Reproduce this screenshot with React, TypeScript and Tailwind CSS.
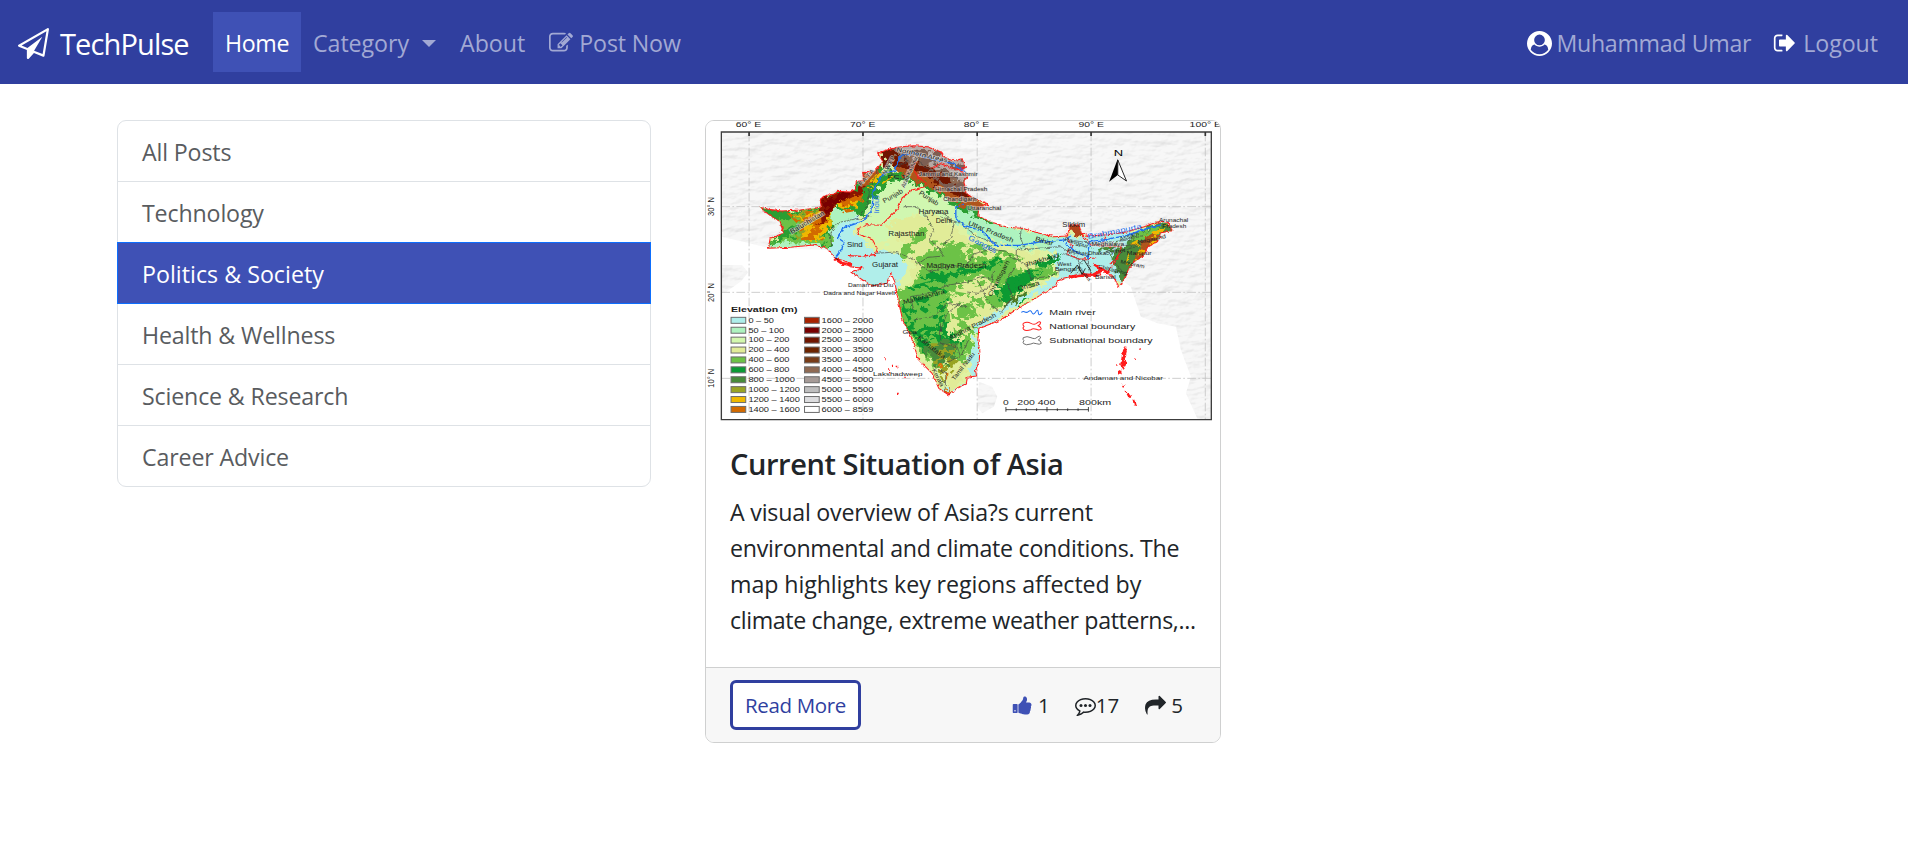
import type { ReactNode } from "react";

const BODY = "'Open Sans', 'Noto Sans', sans-serif";
const MAP_FONT = "'Liberation Sans', Arial, sans-serif";

function Glyph({ d, className, children }: { d: string; className: string; children?: ReactNode }) {
  return (
    <svg viewBox="0 0 1792 1792" className={className} fill="currentColor" aria-hidden="true">
      <path d={d} />
      {children}
    </svg>
  );
}

const ICONS = {
  plane:
    "M1764 11q33 24 27 64l-256 1536q-5 29-32 45-14 8-31 8-11 0-24-5l-527-215-298 327q-18 21-47 21-14 0-23-4-19-7-30-23.5t-11-36.5v-452l-472-193q-37-14-40-55-3-39 32-59l1664-960q35-21 68 2zm-342 1499l221-1323-1434 827 336 137 863-639-478 797z",
  edit:
    "M888 1184l116-116-152-152-116 116v56h96v96h56zm440-720q-16-16-33 1l-350 350q-17 17-1 33t33-1l350-350q17-17 1-33zm80 594v190q0 119-84.5 203.5t-203.5 84.5h-832q-119 0-203.5-84.5t-84.5-203.5v-832q0-119 84.5-203.5t203.5-84.5h832q63 0 117 25 15 7 18 23 3 17-9 29l-49 49q-14 14-32 8-23-6-45-6h-832q-66 0-113 47t-47 113v832q0 66 47 113t113 47h832q66 0 113-47t47-113v-126q0-13 9-22l64-64q15-15 35-7t20 29zm-96-738l288 288-672 672h-288v-288zm444 132l-92 92-288-288 92-92q28-28 68-28t68 28l152 152q28 28 28 68t-28 68z",
  user:
    "M1523 1339q-22-155-87.5-257.5t-184.5-118.5q-67 74-159.5 115.5t-195.5 41.5-195.5-41.5-159.5-115.5q-119 16-184.5 118.5t-87.5 257.5q106 150 271 237.5t356 87.5 356-87.5 271-237.5zm-243-699q0-159-112.5-271.5t-271.5-112.5-271.5 112.5-112.5 271.5 112.5 271.5 271.5 112.5 271.5-112.5 112.5-271.5zm512 256q0 182-71 347.5t-190.5 286-285.5 191.5-349 71-349-71-285.5-191.5-190.5-286-71-347.5 71-348 191-286 286-191 348-71 348 71 286 191 191 286 71 348z",
  signOut:
    "M704 1440q0 4 1 20t.5 26.5-3 23.5-10 19.5-20.5 6.5h-320q-119 0-203.5-84.5t-84.5-203.5v-704q0-119 84.5-203.5t203.5-84.5h320q13 0 22.5 9.5t9.5 22.5q0 4 1 20t.5 26.5-3 23.5-10 19.5-20.5 6.5h-320q-66 0-113 47t-47 113v704q0 66 47 113t113 47h312l11.5 1 11.5 3 8 5.5 7 9 2 13.5zm928-544q0 26-19 45l-544 544q-19 19-45 19t-45-19-19-45v-288h-448q-26 0-45-19t-19-45v-384q0-26 19-45t45-19h448v-288q0-26 19-45t45-19 45 19l544 544q19 19 19 45z",
  thumb:
    "M320 1344q0-26-19-45t-45-19q-27 0-45.5 19t-18.5 45q0 27 18.5 45.5t45.5 18.5q26 0 45-18.5t19-45.5zm1344-512q0 86-55 149 15 44 15 76 3 76-43 137 17 56 0 117-15 57-54 94 9 112-49 181-64 76-197 78h-129q-66 0-144-15.5t-121.5-29-120.5-39.5q-123-43-158-44-26-1-45-19.5t-19-44.5v-641q0-25 18-43.5t43-20.5q24-2 76-59t101-121q68-87 101-120 18-18 31-48t17.5-48.5 13.5-60.5q7-39 12.5-61t19.5-52 34-50q19-19 45-19 46 0 82.5 10.5t60 26 40 40.5 24 45 12 50 5 45 .5 39q0 38-9.5 76t-19 60-27.5 56q-3 6-10 18t-11 22-8 24h277q78 0 135 57t57 135zm-1184 0v640q0 26-19 45t-45 19h-288q-26 0-45-19t-19-45v-640q0-26 19-45t45-19h288q26 0 45 19t19 45z",
  share:
    "M1792 640q0 26-19 45l-512 512q-19 19-45 19t-45-19-19-45v-256h-224q-98 0-175.5 6t-154 21.5-133 42.5-105.5 69.5-80 101-48.5 138.5-17.5 181q0 55 5 123 0 6 2.5 23.5t2.5 26.5q0 15-8.5 25t-23.5 10q-16 0-28-17-7-9-13-22t-13.5-30-10.5-24q-127-285-127-451 0-199 53-333 162-403 875-403h224v-256q0-26 19-45t45-19 45 19l512 512q19 19 19 45z",
  comment:
    "M896 384q-204 0-381.5 69.5t-282 187.5-104.5 255q0 112 71.5 213.5t201.5 175.5l87 50-27 96q-24 91-70 172 152-63 275-171l43-38 57 6q69 8 130 8 204 0 381.5-69.5t282-187.5 104.5-255-104.5-255-282-187.5-381.5-69.5zm896 512q0 174-120 321.5t-326 233-450 85.5q-70 0-145-8-198 175-460 242-49 14-114 22h-5q-15 0-27-10.5t-16-27.5v-1q-3-4-.5-12t2-10 4.5-9.5l6-9 7-8.5 8-9q7-8 31-34.5t34.5-38 31-39.5 32.5-51 27-59 26-76q-157-89-247.5-220t-90.5-281q0-174 120-321.5t326-233 450-85.5 450 85.5 326 233 120 321.5z",
};

type Label = { t: string; x: number; y: number; w: number; s?: number; r?: number; c?: string; b?: boolean; h?: boolean };

function MapText({ t, x, y, w, s = 20, r = 0, c = "#1c1c1c", b = false, h = false }: Label) {
  return (
    <text
      transform={`translate(${x} ${y}) rotate(${r})`}
      textLength={w}
      lengthAdjust="spacingAndGlyphs"
      fontSize={s}
      fill={c}
      fontWeight={b ? 700 : 400}
      stroke={h ? "rgba(225,222,218,.6)" : "none"}
      strokeWidth={h ? 5 : 0}
      paintOrder="stroke"
    >
      {t}
    </text>
  );
}

const LAND =
  "M178 292L205 298 245 303 300 300 345 295 363 290 360 268 372 258 400 252 412 244 430 245 450 246 465 238 468 215 490 210 487 187 520 188 530 175 548 155 532 130 560 120 590 112 640 107 680 110 720 125 730 140 755 152 785 146 795 175 780 180 802 200 790 215 797 250 820 265 865 283 835 292 832 318 870 335 920 352 965 355 1010 368 1060 380 1100 378 1108 345 1135 345 1142 370 1165 378 1220 374 1280 365 1330 350 1370 335 1400 340 1415 362 1380 368 1370 395 1340 412 1325 440 1300 455 1282 480 1275 500 1255 530 1240 505 1215 482 1190 470 1200 495 1170 498 1130 500 1100 505 1070 512 1065 528 1030 548 990 575 960 590 900 630 870 642 835 655 832 690 838 720 836 755 825 780 828 798 800 802 798 822 770 835 745 855 715 835 695 790 655 750 632 680 607 630 593 570 583 515 572 490 560 520 515 528 452 487 485 475 450 470 440 455 405 445 380 415 340 405 270 412 205 415 210 385 250 370 240 335 215 320Z";

const AXIS: Label[] = [
  { t: "60° E", x: 107, y: 50, w: 76 },
  { t: "70° E", x: 449, y: 50, w: 76 },
  { t: "80° E", x: 790, y: 50, w: 76 },
  { t: "90° E", x: 1133, y: 50, w: 76 },
  { t: "100° E", x: 1466, y: 50, w: 94 },
  { t: "30° N", x: 43, y: 318, w: 57, s: 29, r: -90 },
  { t: "20° N", x: 43, y: 576, w: 57, s: 29, r: -90 },
  { t: "10° N", x: 43, y: 833, w: 57, s: 29, r: -90 },
];

const PLACES: Label[] = [
  { t: "Northern Areas", x: 588, y: 124, w: 155, s: 18, r: 12, h: true },
  { t: "N.W.F.P", x: 556, y: 196, w: 62, s: 18, r: -62, h: true },
  { t: "F.C.T.", x: 562, y: 208, w: 60, s: 18 },
  { t: "F.A.T.A", x: 482, y: 228, w: 60, s: 16, r: -48, h: true },
  { t: "Azad Kashmir", x: 612, y: 234, w: 100, s: 17, r: -66, h: true },
  { t: "Jammu and Kashmir", x: 655, y: 198, w: 176, s: 17, h: true },
  { t: "Himachal Pradesh", x: 704, y: 243, w: 156, s: 17, h: true },
  { t: "Chandigarh", x: 728, y: 273, w: 100, s: 17, h: true },
  { t: "Uttaranchal", x: 800, y: 300, w: 102, s: 18, h: true },
  { t: "Baluchistan", x: 275, y: 372, w: 115, s: 20, r: -31, h: true },
  { t: "Punjab", x: 552, y: 280, w: 66, s: 20, r: -30 },
  { t: "Punjab", x: 654, y: 252, w: 66, s: 20, r: 33 },
  { t: "Haryana", x: 654, y: 313, w: 90, s: 20 },
  { t: "Delhi", x: 706, y: 340, w: 48, s: 19 },
  { t: "Rajasthan", x: 564, y: 378, w: 108, s: 20 },
  { t: "Sind", x: 440, y: 411, w: 47, s: 20 },
  { t: "Gujarat", x: 515, y: 470, w: 78, s: 20 },
  { t: "Madhya Pradesh", x: 678, y: 475, w: 180, s: 20 },
  { t: "Uttar Pradesh", x: 802, y: 344, w: 144, s: 20, r: 22 },
  { t: "Bihar", x: 1002, y: 392, w: 56, s: 20, r: 16 },
  { t: "Sikkim", x: 1085, y: 352, w: 68, s: 19 },
  { t: "Meghalaya", x: 1172, y: 409, w: 98, s: 17, h: true },
  { t: "Rangpur", x: 1090, y: 392, w: 74, s: 17, r: 18 },
  { t: "Rajshahi", x: 1098, y: 426, w: 68, s: 17, r: 12 },
  { t: "Dhaka", x: 1162, y: 436, w: 54, s: 17 },
  { t: "Sylhet", x: 1215, y: 434, w: 60, s: 17, r: -8 },
  { t: "Assam", x: 1258, y: 394, w: 60, s: 17, r: -18 },
  { t: "Nagaland", x: 1312, y: 402, w: 86, s: 17, r: -12 },
  { t: "Manipur", x: 1278, y: 434, w: 74, s: 17 },
  { t: "Mizoram", x: 1258, y: 460, w: 74, s: 16, r: 12 },
  { t: "Arunachal", x: 1374, y: 337, w: 88, s: 15 },
  { t: "Pradesh", x: 1384, y: 354, w: 72, s: 17 },
  { t: "Jharkhand", x: 975, y: 470, w: 104, s: 19, r: -16 },
  { t: "Chhattisgarh", x: 872, y: 560, w: 118, s: 18, r: -62 },
  { t: "Orissa", x: 954, y: 543, w: 66, s: 20, r: -16 },
  { t: "West", x: 1070, y: 467, w: 42, s: 17 },
  { t: "Bengal", x: 1062, y: 484, w: 66, s: 17 },
  { t: "Khulna", x: 1128, y: 474, w: 54, s: 15, r: 48 },
  { t: "Barisal", x: 1183, y: 507, w: 62, s: 16 },
  { t: "Chittagong", x: 1192, y: 474, w: 88, s: 16, r: 14 },
  { t: "Maharashtra", x: 610, y: 583, w: 128, s: 19, r: -15 },
  { t: "Daman and Diu", x: 443, y: 530, w: 136, s: 17 },
  { t: "Dadra and Nagar Haveli", x: 370, y: 554, w: 214, s: 17 },
  { t: "Goa", x: 606, y: 672, w: 44, s: 18 },
  { t: "Karnataka", x: 650, y: 686, w: 100, s: 20, r: 38 },
  { t: "Andhra Pradesh", x: 750, y: 690, w: 155, s: 19, r: -27 },
  { t: "Kerala", x: 694, y: 780, w: 58, s: 18, r: 62 },
  { t: "Tamil Nadu", x: 762, y: 812, w: 100, s: 18, r: -52 },
  { t: "Lakshadweep", x: 518, y: 797, w: 148, s: 17 },
  { t: "Andaman and Nicobar", x: 1148, y: 809, w: 238, s: 18 },
  { t: "Indus", x: 537, y: 310, w: 54, s: 24, r: -90, c: "#1a6fe8" },
  { t: "Ganges", x: 802, y: 388, w: 92, s: 22, r: 27, c: "#1a6fe8" },
  { t: "Brahmapurta", x: 1162, y: 387, w: 164, s: 22, r: -11, c: "#1a6fe8" },
];

const LEGEND: [string, string][] = [
  ["#aeeeea", "0 – 50"],
  ["#aef3bf", "50 – 100"],
  ["#d3f8ae", "100 – 200"],
  ["#e1ec98", "200 – 400"],
  ["#6cc246", "400 – 600"],
  ["#0a9a33", "600 – 800"],
  ["#488b3a", "800 – 1000"],
  ["#99a324", "1000 – 1200"],
  ["#efb800", "1200 – 1400"],
  ["#d26a00", "1400 – 1600"],
  ["#a82200", "1600 – 2000"],
  ["#780000", "2000 – 2500"],
  ["#701600", "2500 – 3000"],
  ["#6c2400", "3000 – 3500"],
  ["#783c18", "3500 – 4000"],
  ["#8f6a53", "4000 – 4500"],
  ["#a69b97", "4500 – 5000"],
  ["#bebebe", "5000 – 5500"],
  ["#dcdcde", "5500 – 6000"],
  ["#ffffff", "6000 – 8569"],
];

const BOUNDARY_ICON =
  "M3 4Q14-2 26 4T44 3Q52-4 55 2 54 8 48 11 56 14 57 21 52 26 42 22T26 23Q10 28 4 22 0 18 5 13 0 9 3 4Z";

function ElevationMap() {
  return (
    <svg
      viewBox="18 33 1539 900"
      preserveAspectRatio="none"
      className="block h-[300px] w-full"
      fontFamily={MAP_FONT}
      role="img"
      aria-label="Elevation map"
    >
      <defs>
        <filter id="relief" x="0" y="0" width="100%" height="100%">
          <feTurbulence type="fractalNoise" baseFrequency="0.02 0.05" numOctaves="4" seed="8" />
          <feDiffuseLighting surfaceScale="5" diffuseConstant="1.25" lightingColor="#fff">
            <feDistantLight azimuth="225" elevation="50" />
          </feDiffuseLighting>
          <feComponentTransfer result="l">
            <feFuncR type="linear" slope="0.34" intercept="0.59" />
            <feFuncG type="linear" slope="0.34" intercept="0.59" />
            <feFuncB type="linear" slope="0.34" intercept="0.59" />
          </feComponentTransfer>
          <feComposite in="l" in2="SourceGraphic" operator="in" />
        </filter>
        <filter id="rough" x="-10%" y="-10%" width="120%" height="120%">
          <feTurbulence type="fractalNoise" baseFrequency="0.05" numOctaves="5" seed="3" />
          <feDisplacementMap in="SourceGraphic" scale="44" xChannelSelector="R" yChannelSelector="G" />
        </filter>
        <filter id="speckle" x="-5%" y="-5%" width="110%" height="110%">
          <feTurbulence type="fractalNoise" baseFrequency="0.035 0.05" numOctaves="4" seed="21" />
          <feColorMatrix values="0 0 0 0 0  0 0 0 0 0  0 0 0 0 0  22 0 0 0 -11.6" result="mask" />
          <feComposite in="SourceGraphic" in2="mask" operator="in" />
        </filter>
        <filter id="edge" x="-5%" y="-5%" width="110%" height="110%">
          <feTurbulence type="fractalNoise" baseFrequency="0.09" numOctaves="3" seed="5" />
          <feDisplacementMap in="SourceGraphic" scale="11" xChannelSelector="R" yChannelSelector="G" />
        </filter>
        <clipPath id="land">
          <path d={LAND} />
        </clipPath>
      </defs>
      <rect x="18" y="33" width="1539" height="900" fill="#fff" />

      <g filter="url(#relief)">
        <path d="M64 66H1530V928H1490L1455 850 1470 800 1440 720 1425 650 1370 640 1320 620 1290 530 1255 505 1200 480H1100L900 330 640 340 380 420 205 414 130 395 64 380Z" />
        <path d="M64 465h62l18 22-20 26-50 36-10-6zM835 815l40 15 15 30-10 30-35 20-15-20z" />
      </g>
      <path d="M780 112q60 20 120-5t120-38l-60-4H800l-20 25z" fill="#fff" opacity=".45" />

      <g stroke="#c4c4c4" strokeWidth="2.5" strokeDasharray="26 7 5 7">
        <path d="M147 68V928M488 68V928M830 68V928M1171 68V928M1513 68V928M64 290H1530M64 547H1530M64 805H1530" />
      </g>

      <g clipPath="url(#land)">
        <rect x="150" y="90" width="1290" height="790" fill="#dff2a2" />
        <g filter="url(#rough)">
          <path fill="#d0f7b0" d="M500 240L620 190 700 240 800 300 780 340 640 310 560 400 480 380Z" />
          <path fill="#b0eeea" d="M390 300L440 290 480 330 460 370 520 420 600 430 620 470 580 560 430 500 360 420 400 390Z" />
          <path fill="#aef3bf" d="M760 290L960 360 1110 385 1100 430 960 415 850 390 770 340Z" />
          <path fill="#aeeeea" d="M1050 390L1400 350 1260 420 1280 520 1080 530 1060 450Z" />
          <path fill="#e1ec98" d="M560 340L700 310 850 420 1010 430 1050 500 900 600 820 650 740 760 700 700 620 530 640 440Z" />
          <path fill="#6cc246" d="M590 440L625 400 660 350 690 345 670 380 640 410 620 440Z" />
          <path fill="#6cc246" d="M650 440L700 420 760 400 790 430 860 420 900 445 960 440 940 490 870 480 800 500 760 540 740 590 700 680 640 690 600 640 590 540 640 530 660 480Z" />
          <path fill="#6cc246" d="M840 500L900 470 980 480 1060 470 1050 500 960 530 930 570 870 600 850 560 920 530Z" />
          <path fill="#6cc246" d="M605 540L660 510 760 520 790 640 840 640 800 700 800 760 700 770 640 700 610 640Z" />
          <path fill="#0a9a33" d="M605 570L640 600 650 650 710 650 720 610 750 640 790 690 770 730 700 760 650 700 620 640Z" />
          <path fill="#0a9a33" d="M650 500L710 490 850 462 910 445 890 470 790 495 720 512ZM930 590L960 555 1000 545 980 575Z" />
          <path fill="#0a9a33" d="M895 540L940 500 990 480 1010 500 950 540 910 580ZM1000 462l40-20 40-4-20 24-30 14z" />
          <path fill="#e1ec98" d="M740 560L800 540 840 550 850 600 830 650 780 690 730 670 750 620ZM780 440l60-18 60-8 20 18-70 14-60 10z" />
          <path fill="#6cc246" d="M770 590l40-12 10 28-30 22-26-4zM790 700l24-26 10 30-20 26z" />
          <path fill="#488b3a" d="M670 700L740 690 780 710 760 750 710 765 675 735Z" />
          <path fill="#4d7d28" d="M910 580l30-22 35-12-14 24-40 24z" />
          <path fill="#aeeeea" d="M845 660L960 575 1080 520 1070 500 1000 540 930 580 860 620 820 650 825 700 800 740 815 790 770 840 748 862 720 830 800 845 850 780Z" />
          <path fill="#e1ec98" d="M730 760l50-10 20 30-30 40-20 30-10-50z" />
          <path fill="#d8760a" d="M708 765l14-5 6 10-12 6zM730 800l12-4 3 12-10 2zM738 842l5-14 5 14-4 8z" />
          <path fill="#2a9e30" d="M170 280L250 300 350 295 400 240 500 190 510 260 490 310 450 320 400 290 390 340 395 410 200 410 240 370Z" />
          <path fill="#6cc246" d="M230 330l60-10 20 24-50 14zM210 396l60-18 80 2 50-10-6 30-80 12z" />
          <path fill="#aef3bf" d="M200 404l60-8 100 4 20 18-180 4zM395 300l60-2 20 20-50 24-36 30z" />
          <path fill="#99a324" d="M270 305L360 298 380 350 360 390 290 380 300 345Z" />
          <path fill="#efb800" d="M280 318L350 312 375 290 480 240 470 290 400 285 385 360 340 392 300 375 340 340Z" />
          <path fill="#d26a00" d="M300 332L360 320 370 280 470 235 490 270 440 280 400 280 380 340 350 370 320 378 345 345Z" />
          <path fill="#8a1800" d="M355 300L365 262 430 245 465 235 480 215 500 225 480 255 440 268 410 274 385 320 370 350 350 345 365 320Z" />
          <path fill="#780000" d="M372 270l50-15 36-6-20 20-40 14-16 26z" />
          <path fill="#2a9e30" d="M490 230L540 170 600 190 680 200 740 250 800 280 900 340 860 338 780 300 700 250 640 215 560 215 500 290Z" />
          <path fill="#b0541a" d="M485 200L540 165 535 190 510 220 490 240ZM580 170L640 160 700 210 730 240 800 262 870 284 830 300 740 268 690 232 640 210 600 190Z" />
          <path fill="#701600" d="M520 90L720 90 810 130 820 270 740 250 700 218 640 175 560 170Z" />
          <path fill="#8f6a53" d="M560 95L700 90 810 130 810 240 740 220 700 190 650 165 600 150Z" />
          <path fill="#b7aba6" d="M600 90L660 90 740 120 800 150 800 220 760 205 735 180 690 165 660 140 610 135Z" />
          <path fill="#701600" d="M640 160L690 170 740 200 760 230 710 220 670 190ZM540 135l40-8 10 20-30 10z" />
          <path fill="#b0441a" d="M1108 345h28l4 26-12 10-18-12z" />
          <path fill="#488b3a" d="M1180 412L1240 400 1250 415 1200 422ZM1230 440l80-70 60-30 40-4 8 30-40 10-10 40-50 40-30 30-20 40-16-20z" />
          <path fill="#b0541a" d="M1330 382l30-12 50-8-30 22-10 30-40 30-30 18 10-40z" />
          <path fill="#6cc246" d="M1290 378l60-22 40-8-30 22-60 24z" />
        </g>
        <g filter="url(#speckle)">
          <path fill="#6cc246" d="M600 550L640 520 720 600 740 700 700 720 640 680Z" />
          <path fill="#0a9a33" d="M620 530L740 500 750 560 720 640 660 600ZM860 500L1040 470 1000 520 900 590Z" />
          <path fill="#6cc246" d="M680 390L860 400 960 440 900 520 760 540 740 460ZM740 540L860 560 830 660 770 720Z" />
          <path fill="#99a324" d="M690 700l70 0 20 60-50 60-30-50z" />
          <path fill="#d26a00" d="M260 310L360 300 370 390 290 390 300 350ZM400 290L480 250 480 300 430 310Z" />
          <path fill="#efb800" d="M1290 400L1400 340 1370 400 1270 480ZM490 230l50-50 40 20-60 40z" />
          <path fill="#7d5f52" d="M540 110L720 100 800 150 800 250 730 230 640 170Z" />
        </g>
      </g>

      <g fill="none" stroke="#444" strokeWidth="2" filter="url(#edge)">
        <path d="M395 410l-6-40 20-30 60-15 30-30 10-60 30-70M470 330l40-12M610 290l40 0 30 30 20 40-14 30 26 20 20 28-50 4-30 20M690 300l50 15 20 30-10 40-24 20M525 430l60-4 50 20 50 40 70-20 40 6 24-40 50-14 50 6 20 24M720 320l60 20 50 40 60 20M963 350l-4 30 10 30-22 10 0 26M960 420l60-6 60-4 30 20M940 445l40 20 10 40 60-6 30-16M640 600l-10-40 60-10 50-24 60-10 40-16 40 10M880 480l-10 50-40 20-30-4M830 510l30 60 40 40 36-50-20-50 30-40M640 630l60-10 40-40 60 10M720 660l20-50 40-30M720 640l0 60 50 10 10 30-50 20M700 770l36 18-2 60M780 740l24-50M1085 430l60 20-16 40M1110 390l60 10 100-8 60-16M1210 430l40-22 50-4 40-20M1230 460l40-40 50-16M1160 440l10 50M1130 440l14 56M1240 450l20 30M700 160l40 30 40 20M650 120l10 40 60 40M600 115l20 40-40 20M730 230l50 20 20 20M560 160l20 40 30 10" />
      </g>
      <g fill="none" stroke="#ff1a1a" strokeWidth="3" filter="url(#edge)" strokeLinejoin="round">
        <path d={LAND} />
        <path d="M523 436l8-20-14-26-42-18-6-14 30-14 44 2 20-20 30-30 12-32 30-24 38-10 4-10-24-20-16-26 10-20M690 175l30-14 50 18 24-6M1098 380l18 30-20 20 40 18 50-4M1142 372l30 34 90 4-12 36-30 40M1215 380l-12 26M1255 440l-30 24" />
        <path strokeWidth="9" d="M405 446l20 14 30 6M1105 502l40-8 30 2 30-16 20 10M1180 462l30 20" />
        <path strokeWidth="4" d="M443 437l40 2 44-6" />
      </g>
      <path d="M1110 490l20-25 14 28 10-18M1150 450l20 32M405 444l10 6" stroke="#151515" strokeWidth="2.5" fill="none" />
      <g fill="none" stroke="#1f6ff0" strokeWidth="4" strokeLinejoin="round" filter="url(#edge)">
        <path d="M405 442l20-26 6-20-18-12 14-30 60-20 28-34 4-60 30-50 34-8 18-46 44-6 50 18 60 12 40 26" />
        <path d="M790 282l-24 10 0 30 20 22 60 20 40 42 70 0 60-10 74-6 20-12" />
        <path d="M1380 345l-45 12-60 20-60 12-50 6-4 52M1095 400l30 26 40 16" />
      </g>

      <path d="M64 66H1531V929H64Z" fill="none" stroke="#3c3c3c" strokeWidth="4" />
      <path d="M147 66v12M488 66v12M830 66v12M1171 66v12M1513 66v12" stroke="#333" strokeWidth="5" />

      {AXIS.map((l) => (
        <MapText key={l.t} {...l} />
      ))}
      {PLACES.map((l, i) => (
        <MapText key={i} {...l} />
      ))}

      <MapText t="N" x={1239} y={137} w={28} s={25} c="#000" />
      <path d="M1251 146L1225 215 1251 195Z" />
      <path d="M1251 150L1277 213 1251 195Z" fill="#fff" stroke="#000" strokeWidth="2.5" />

      <MapText t="Elevation (m)" x={93} y={606} w={199} s={24} b />
      {LEGEND.map(([color, text], i) => {
        const second = i > 9;
        const y = 630 + (i % 10) * 29.7;
        return (
          <g key={text}>
            <rect x={second ? 313 : 93} y={y - 8} width="44" height="18" fill={color} stroke="#6d6d6d" strokeWidth="3" />
            <MapText
              t={text}
              x={second ? 364 : 145}
              y={y + 8}
              w={second ? 155 : i === 0 ? 76 : i === 1 ? 107 : i < 6 ? 123 : i === 6 ? 139 : 154}
              s={22}
            />
          </g>
        );
      })}

      <path d="M962 607q6-4 11-1t11-2 10 4 11-2 8 2 12-1" fill="none" stroke="#1f6ff0" strokeWidth="3" />
      <g transform="translate(965 636)">
        <path d={BOUNDARY_ICON} fill="none" stroke="#ff2020" strokeWidth="3" />
      </g>
      <g transform="translate(965 679)">
        <path d={BOUNDARY_ICON} fill="none" stroke="#555" strokeWidth="2.5" />
      </g>
      <MapText t="Main river" x={1046} y={614} w={139} s={24} />
      <MapText t="National boundary" x={1046} y={657} w={257} s={24} />
      <MapText t="Subnational boundary" x={1046} y={699} w={309} s={24} />

      <MapText t="0" x={907} y={884} w={17} s={23} />
      <MapText t="200 400" x={950} y={884} w={114} s={23} />
      <MapText t="800km" x={1135} y={884} w={96} s={23} />
      <path
        d="M916 899H1163M916 891v14M947 895v8M977 895v8M1008 895v8M1039 891v14M1070 895v8M1101 895v8M1132 895v8M1163 891v14"
        stroke="#222"
        strokeWidth="2.5"
      />

      <g fill="#ff1a1a" filter="url(#edge)">
        <path d="M1268 713l8-4 2 18-6 22 6 8-12 22-8-12 4-24zM1251 787l10-6 2 8-10 6zM1264 825l6-2 2 8-6 2zM1274 845l7 2 8 10 8-3-6 10-9-3zM1295 868l10 6 4 14-10-2z" />
        <path d="M1316 715h4v4h-4zM1301 746h4v4h-4zM1246 763h4v4h-4zM552 744h4v4h-4zM574 764h4v4h-4zM586 767h5v5h-5zM563 775h4v4h-4zM612 800h4v4h-4zM590 848h5v5h-5zM566 786h4v4h-4z" />
      </g>
    </svg>
  );
}

const CATEGORIES = [
  "All Posts",
  "Technology",
  "Politics & Society",
  "Health & Wellness",
  "Science & Research",
  "Career Advice",
];

export default function App() {
  return (
    <div className="min-h-screen bg-white text-[24px] text-[#212529]" style={{ fontFamily: BODY }}>
      <nav className="flex h-[84px] items-center bg-[#303f9f] pt-[2px] pr-[30px] pl-[18px] text-[23.2px] leading-[36px] tracking-[-0.33px] text-[#a2a9d4]">
        <a className="flex w-[195px] items-center text-[29px] leading-[45px] tracking-[-0.87px] text-white">
          <Glyph d={ICONS.plane} className="size-[31px]" />
          <span className="ml-[11px]">TechPulse</span>
        </a>
        <a className="mb-[2px] flex h-[60px] w-[88px] items-center justify-center bg-[#3f51b5] pt-[2px] text-white">
          Home
        </a>
        <a className="ml-[12px] flex items-center tracking-[-0.05px]">
          Category
          <span className="ml-[13px] border-x-[7px] border-t-[7px] border-x-transparent border-t-current" />
        </a>
        <a className="ml-[24px] tracking-normal">About</a>
        <a className="ml-[24px] flex items-center gap-[6px] tracking-[-0.15px]">
          <Glyph d={ICONS.edit} className="size-[24px]" />
          Post Now
        </a>
        <div className="ml-auto flex items-center">
          <a className="flex items-center gap-[5px]">
            <Glyph d={ICONS.user} className="size-[25px] text-white" />
            Muhammad Umar
          </a>
          <a className="ml-[22px] flex items-center gap-[6px] tracking-[-0.05px]">
            <Glyph d={ICONS.signOut} className="size-[24px] text-white" />
            Logout
          </a>
        </div>
      </nav>

      <main className="flex items-start pt-[36px] pl-[117px]">
        <ul className="w-[534px] rounded-[9px] border border-[#dee2e6] text-[23.2px] leading-[36px] tracking-[-0.15px] text-[#595c5f]">
          {CATEGORIES.map((name, i) => (
            <li
              key={name}
              className={
                i === 2
                  ? "-mx-px -mt-px flex h-[62px] items-center border border-[#0d6efd] bg-[#3f51b5] pt-[2px] pl-[24px] tracking-[0.03px] text-white"
                  : i === 5
                    ? "flex h-[60px] items-center pt-[2px] pl-[24px]"
                    : "flex h-[61px] items-center border-b border-[#dee2e6] pt-[2px] pl-[24px]"
              }
            >
              {name}
            </li>
          ))}
        </ul>

        <article className="ml-[54px] flex h-[623px] w-[516px] flex-col overflow-hidden rounded-[9px] border border-[#cfd0d0]">
          <ElevationMap />
          <div className="flex-1 pt-[25px] pl-[24px]">
            <h5 className="text-[29px] leading-[36px] font-semibold tracking-[-0.42px] whitespace-nowrap">
              Current Situation of Asia
            </h5>
            <p className="mt-[12px] text-[23.2px] leading-[36px] whitespace-nowrap">
              <span className="block tracking-[-0.2px]">A visual overview of Asia?s current</span>
              <span className="block tracking-[-0.28px]">environmental and climate conditions. The</span>
              <span className="block tracking-[-0.08px]">map highlights key regions affected by</span>
              <span className="block tracking-[-0.36px]">climate change, extreme weather patterns,...</span>
            </p>
          </div>
          <div className="flex h-[75px] items-center border-t border-[#cfd0d0] bg-[#f7f7f7] pr-[37px] pl-[24px] text-[20.5px]">
            <button className="h-[50px] w-[131px] rounded-[6px] border-[3px] border-[#303f9f] bg-white tracking-[-0.35px] text-[#303f9f]">
              Read More
            </button>
            <div className="ml-auto flex items-center">
              <Glyph d={ICONS.thumb} className="size-[21px] text-[#3f51b5]" />
              <span className="ml-[5px]">1</span>
              <Glyph d={ICONS.comment} className="ml-[25px] size-[21px]">
                <circle cx="512" cy="896" r="128" />
                <circle cx="896" cy="896" r="128" />
                <circle cx="1280" cy="896" r="128" />
              </Glyph>
              <span>17</span>
              <Glyph d={ICONS.share} className="ml-[26px] size-[21px]" />
              <span className="ml-[5px]">5</span>
            </div>
          </div>
        </article>
      </main>
    </div>
  );
}
